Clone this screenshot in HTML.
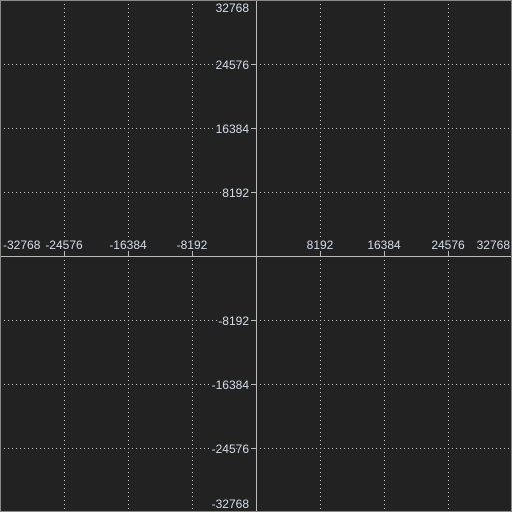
<!DOCTYPE html>
<html><head><meta charset="utf-8"><style>
html,body{margin:0;padding:0;background:#222;}
svg{display:block}
text{font-family:"Liberation Sans",sans-serif;font-size:12px;fill:#d2dcea;paint-order:stroke;stroke:#222;stroke-width:3px}
</style></head><body>
<svg width="512" height="512" xmlns="http://www.w3.org/2000/svg">
<rect x="0" y="0" width="512" height="512" fill="#222"/>
<g stroke="#c8c8c8" stroke-width="1" stroke-dasharray="1 3">
<line x1="64.5" y1="0" x2="64.5" y2="512"/>
<line x1="128.5" y1="0" x2="128.5" y2="512"/>
<line x1="192.5" y1="0" x2="192.5" y2="512"/>
<line x1="320.5" y1="0" x2="320.5" y2="512"/>
<line x1="384.5" y1="0" x2="384.5" y2="512"/>
<line x1="448.5" y1="0" x2="448.5" y2="512"/>
<line x1="0" y1="64.5" x2="512" y2="64.5"/>
<line x1="0" y1="128.5" x2="512" y2="128.5"/>
<line x1="0" y1="192.5" x2="512" y2="192.5"/>
<line x1="0" y1="320.5" x2="512" y2="320.5"/>
<line x1="0" y1="384.5" x2="512" y2="384.5"/>
<line x1="0" y1="448.5" x2="512" y2="448.5"/>
</g>
<text x="3" y="249">-32768</text>
<text x="64" y="249" text-anchor="middle">-24576</text>
<text x="128" y="249" text-anchor="middle">-16384</text>
<text x="192" y="249" text-anchor="middle">-8192</text>
<text x="320" y="249" text-anchor="middle">8192</text>
<text x="384" y="249" text-anchor="middle">16384</text>
<text x="448" y="249" text-anchor="middle">24576</text>
<text x="510" y="249" text-anchor="end">32768</text>
<text x="249" y="12" text-anchor="end">32768</text>
<text x="249" y="69" text-anchor="end">24576</text>
<text x="249" y="133" text-anchor="end">16384</text>
<text x="249" y="197" text-anchor="end">8192</text>
<text x="249" y="325" text-anchor="end">-8192</text>
<text x="249" y="389" text-anchor="end">-16384</text>
<text x="249" y="453" text-anchor="end">-24576</text>
<text x="249" y="508" text-anchor="end">-32768</text>
<g stroke="#bbb" stroke-width="1">
<line x1="256.5" y1="0" x2="256.5" y2="512"/>
<line x1="0" y1="256.5" x2="512" y2="256.5"/>
<path d="M64.5 251v5M128.5 251v5M192.5 251v5M320.5 251v5M384.5 251v5M448.5 251v5M251 64.5h5M251 128.5h5M251 192.5h5M251 320.5h5M251 384.5h5M251 448.5h5"/>
</g>
<rect x="0.5" y="0.5" width="511" height="511" fill="none" stroke="#8a8a8a"/>
</svg>
</body></html>
